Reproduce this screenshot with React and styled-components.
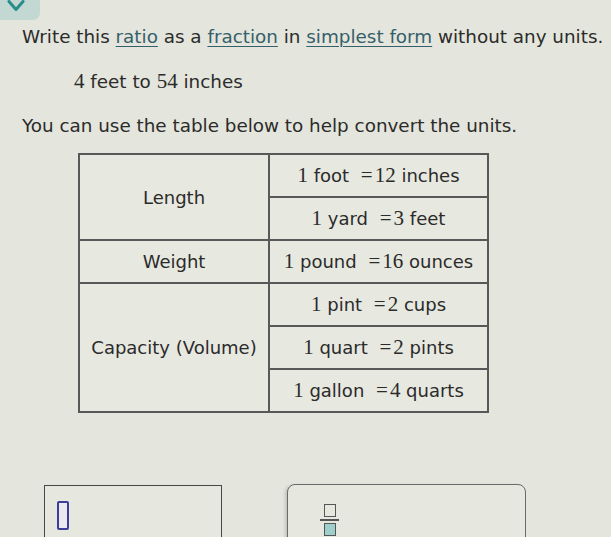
import React from "react";
import styled, { createGlobalStyle } from "styled-components";

const Global = createGlobalStyle`
  html, body { margin: 0; padding: 0; }
  body {
    background: #e4e5dc;
    font-family: "DejaVu Sans", Verdana, sans-serif;
    color: #2b2b2b;
    width: 611px;
    height: 537px;
    overflow: hidden;
  }
`;

const Page = styled.div`
  display: flex;
  flex-direction: column;
  height: 537px;
  & > * { flex-shrink: 0; }
`;

const Tab = styled.div`
  width: 40px;
  height: 20px;
  background: #c3d8d2;
  border-radius: 0 0 7px 0;
  display: flex;
  align-items: flex-start;
  padding: 0 0 0 6px;
  box-sizing: border-box;
`;

const Prompt = styled.p`
  margin: 5px 0 0 22px;
  font-size: 18.35px;
  line-height: 24px;
  white-space: nowrap;
`;

const Term = styled.span`
  color: #35606b;
  text-decoration: underline;
  text-underline-offset: 3px;
  text-decoration-thickness: 1px;
`;

const Given = styled.p`
  margin: 20px 0 0 74px;
  font-size: 18.35px;
  line-height: 24px;
`;

const Hint = styled.p`
  margin: 20px 0 0 22px;
  font-size: 18.35px;
  line-height: 24px;
`;

const Num = styled.span`
  font-family: "Liberation Serif", "Times New Roman", serif;
  font-size: 21px;
`;

const Eq = styled.span`
  font-family: "Liberation Serif", "Times New Roman", serif;
  font-size: 21px;
  margin: 0 2px 0 6px;
`;

const Table = styled.table`
  margin: 15px 0 0 78px;
  border-collapse: collapse;
  table-layout: fixed;
  width: 409px;
  border: 2px solid #444;
  font-size: 18px;
`;

const Col = styled.col`
  width: ${(p) => p.$w}px;
`;

const Cell = styled.td`
  border: 2px solid #585858;
  text-align: center;
  padding: 0;
  height: 41px;
  background: #e7e8df;
  white-space: nowrap;
`;

const Answers = styled.div`
  display: flex;
  align-items: flex-start;
  margin: 72px 0 0 44px;
  gap: 65px;
`;

const InputBox = styled.div`
  width: 178px;
  height: 70px;
  border: 1px solid #474747;
  background: #e6e7de;
  padding: 15px 0 0 12px;
  box-sizing: border-box;
`;

const Caret = styled.div`
  width: 8px;
  height: 25px;
  border: 2px solid #3d3d99;
  border-radius: 2px;
  background: #e9e9f0;
`;

const Tools = styled.div`
  width: 239px;
  height: 70px;
  margin-top: -1px;
  border: 1px solid #6a6a6a;
  border-radius: 8px;
  background: #e6e7de;
  box-shadow: -2px 1px 3px rgba(0,0,0,0.15);
  padding: 19px 0 0 32px;
  box-sizing: border-box;
`;

const FracIcon = styled.div`
  display: flex;
  flex-direction: column;
  align-items: center;
  width: 19px;
  gap: 2px;
`;

const Sq = styled.div`
  width: 10px;
  height: 11px;
  border: 1px solid #555;
  background: ${(p) => (p.$fill ? "#9fcfca" : "transparent")};
`;

const Bar = styled.div`
  width: 19px;
  height: 2px;
  background: #555;
`;

const Conv = ({ a, u1, b, u2 }) => (
  <>
    <Num>{a}</Num> {u1} <Eq>=</Eq>
    <Num>{b}</Num> {u2}
  </>
);

export default function App() {
  return (
    <Page>
      <Global />
      <Tab>
        <svg width="20" height="13" viewBox="0 0 20 13">
          <path d="M3 1.5 L10 9.5 L17 1.5" fill="none" stroke="#2a8c8c" strokeWidth="3" strokeLinecap="round" strokeLinejoin="round" />
        </svg>
      </Tab>
      <Prompt>
        Write this <Term>ratio</Term> as a <Term>fraction</Term> in <Term>simplest form</Term> without any units.
      </Prompt>
      <Given>
        <Num>4</Num> feet to <Num>54</Num> inches
      </Given>
      <Hint>You can use the table below to help convert the units.</Hint>
      <Table>
        <colgroup>
          <Col $w={190} />
          <Col $w={219} />
        </colgroup>
        <tbody>
          <tr>
            <Cell rowSpan={2}>Length</Cell>
            <Cell><Conv a="1" u1="foot" b="12" u2="inches" /></Cell>
          </tr>
          <tr>
            <Cell><Conv a="1" u1="yard" b="3" u2="feet" /></Cell>
          </tr>
          <tr>
            <Cell>Weight</Cell>
            <Cell><Conv a="1" u1="pound" b="16" u2="ounces" /></Cell>
          </tr>
          <tr>
            <Cell rowSpan={3}>Capacity (Volume)</Cell>
            <Cell><Conv a="1" u1="pint" b="2" u2="cups" /></Cell>
          </tr>
          <tr>
            <Cell><Conv a="1" u1="quart" b="2" u2="pints" /></Cell>
          </tr>
          <tr>
            <Cell><Conv a="1" u1="gallon" b="4" u2="quarts" /></Cell>
          </tr>
        </tbody>
      </Table>
      <Answers>
        <InputBox>
          <Caret />
        </InputBox>
        <Tools>
          <FracIcon>
            <Sq />
            <Bar />
            <Sq $fill />
          </FracIcon>
        </Tools>
      </Answers>
    </Page>
  );
}
